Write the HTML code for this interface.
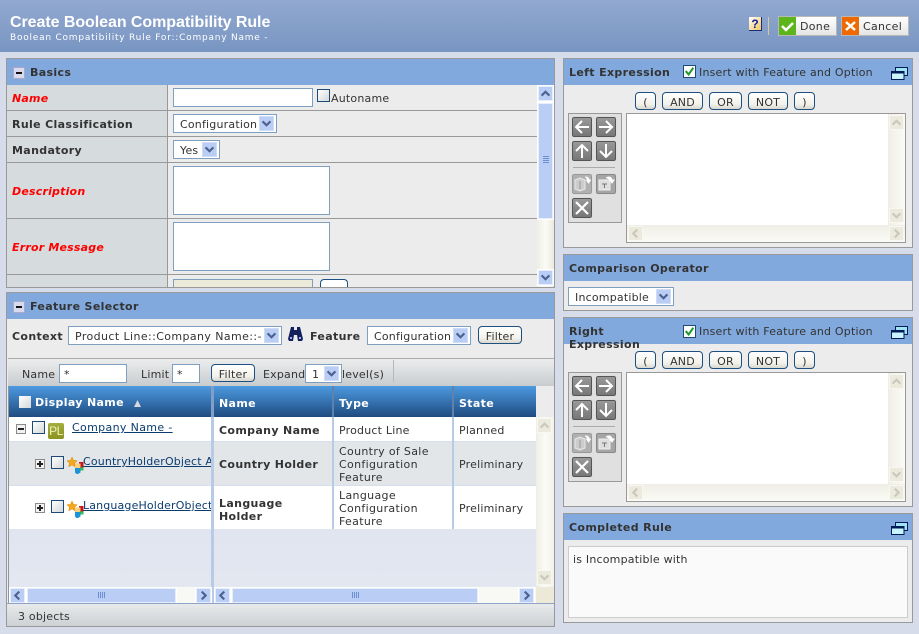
<!DOCTYPE html>
<html><head><meta charset="utf-8"><title>Create Boolean Compatibility Rule</title>
<style>
html,body{margin:0;padding:0}
body{width:919px;height:634px;overflow:hidden;position:relative;background:#d6dcea;font:11px/14px "DejaVu Sans","Liberation Sans",sans-serif;color:#333;letter-spacing:.2px}
div,span,a,svg{position:absolute;box-sizing:border-box}
.t{white-space:nowrap;height:14px;margin-top:1px}
.b{font-weight:bold;letter-spacing:.35px}
.w{color:#fff}
.r{color:#f00;font-style:italic;font-weight:bold;letter-spacing:.2px}
.p{background:#ececec;border:1px solid #999}
.h{background:#81a9dd}
.line{background:#999;height:1px}
.sel{background:#fff;border:1px solid #7f9fc0;height:19px}
.ab{width:15px;height:15px;top:1px;right:2px;background:#b9cdf5;border:1px solid #cfdcf8}
.inp{background:#fff;border:1px solid #7f9fc0;height:19px}
.cb{width:13px;height:13px;border:1px solid #1d4a78;background:linear-gradient(135deg,#fff,#d5d8d8)}
.btn{background:linear-gradient(#fff,#f2f1ea 70%,#d9d8cf);border:1px solid #1d4f80;border-radius:4px;height:18px;text-align:center;line-height:19px;color:#333}
.sq{width:20px;height:20px;background:linear-gradient(#999,#777);border:1px solid #555;border-radius:2px;outline:1px solid #ddd}
.sb{width:15px;height:15px;background:#b9cdf5;border:1px solid #e6eefc;outline:1px solid #fff}
.sd{width:15px;height:15px;background:#ece9dd;border:1px solid #f8f8f2}
.hdr{background:linear-gradient(#4d9ae0,#1f4b80)}
.lk{color:#0b3c6f;text-decoration:underline;letter-spacing:.35px}
.tree{width:10px;height:10px;border:1px solid #8a8a8a;background:#f2f2f2}
.tree i{position:absolute;left:1px;top:3px;width:6px;height:2px;background:#222;display:block}
.tree b{position:absolute;left:3px;top:1px;width:2px;height:6px;background:#222;display:block}
.mn{width:12px;height:12px;background:#d9d9ee;border:1px solid #a9a9c9}
.mn i{position:absolute;left:2px;top:4px;width:6px;height:2px;background:#111;display:block}
</style></head><body>
<svg width="0" height="0" style="left:0;top:0"><defs>
<symbol id="cd" viewBox="0 0 15 15"><path d="M3 5l4.500 4.500L12 5" fill="none" stroke="#4a628f" stroke-width="2.500"/></symbol>
<symbol id="cl" viewBox="0 0 15 15"><path d="M9.500 3L5 7.500 9.500 12" fill="none" stroke="#4a628f" stroke-width="2.500"/></symbol>
<symbol id="cr" viewBox="0 0 15 15"><path d="M5.500 3L10 7.500 5.500 12" fill="none" stroke="#4a628f" stroke-width="2.500"/></symbol>
<symbol id="cu" viewBox="0 0 15 15"><path d="M3 10l4.500-4.500L12 10" fill="none" stroke="#4a628f" stroke-width="2.500"/></symbol>
<symbol id="gd" viewBox="0 0 15 15"><path d="M3 5l4.500 4.500L12 5" fill="none" stroke="#c9c8bd" stroke-width="2.500"/></symbol>
<symbol id="gl" viewBox="0 0 15 15"><path d="M9.500 3L5 7.500 9.500 12" fill="none" stroke="#c9c8bd" stroke-width="2.500"/></symbol>
<symbol id="gr" viewBox="0 0 15 15"><path d="M5.500 3L10 7.500 5.500 12" fill="none" stroke="#c9c8bd" stroke-width="2.500"/></symbol>
<symbol id="gu" viewBox="0 0 15 15"><path d="M3 10l4.500-4.500L12 10" fill="none" stroke="#c9c8bd" stroke-width="2.500"/></symbol>
<symbol id="al" viewBox="0 0 18 18"><path d="M16 9H3M9 3L3 9l6 6" fill="none" stroke="#fff" stroke-width="2"/></symbol>
<symbol id="ar" viewBox="0 0 18 18"><path d="M2 9h13M9 3l6 6-6 6" fill="none" stroke="#fff" stroke-width="2"/></symbol>
<symbol id="au" viewBox="0 0 18 18"><path d="M9 16V3M3 9l6-6 6 6" fill="none" stroke="#fff" stroke-width="2"/></symbol>
<symbol id="ad" viewBox="0 0 18 18"><path d="M9 2v13M3 9l6 6 6-6" fill="none" stroke="#fff" stroke-width="2"/></symbol>
<symbol id="ax" viewBox="0 0 18 18"><path d="M3 3l12 12M15 3L3 15" fill="none" stroke="#fff" stroke-width="2.200"/></symbol>
<symbol id="f1" viewBox="0 0 18 18"><path d="M2 5l5-2 5 2v9l-5 2-5-2z" fill="#ccc" stroke="#e8e8e8"/><path d="M7 6v8" stroke="#999"/><path d="M12 2c3 0 4 1 4 4M13.500 5h4L15.500 8z" fill="#fff" stroke="#fff"/></symbol>
<symbol id="f2" viewBox="0 0 18 18"><rect x="2" y="5" width="11" height="10" fill="#ddd" stroke="#eee"/><path d="M5 9h5M7.500 9v4" stroke="#777"/><path d="M9 3c3-2 6-1 6 3M13 5h4L15 8z" fill="#fff" stroke="#fff"/></symbol>
<symbol id="ws" viewBox="0 0 17 13"><rect x="4.500" y=".5" width="12" height="8" fill="#9fe3f5" stroke="#001b55"/><rect x=".5" y="4.500" width="12.500" height="8" fill="#c8f3ff" stroke="#001b55"/><path d="M1 5.500h12" stroke="#001b55" stroke-width="2"/></symbol>
<symbol id="ck" viewBox="0 0 13 13"><path d="M2 6l3.500 4L11 2" fill="none" stroke="#1f9a2b" stroke-width="2.400"/></symbol>
<symbol id="st" viewBox="0 0 18 18"><path d="M5 0l1.600 3.400 3.600.4-2.700 2.500.8 3.700L5 7.900 1.700 9.800l.8-3.700L-.2 3.800l3.600-.4z" fill="#f5a81c" stroke="#d9860a" stroke-width=".5"/><rect x="12" y="5" width="4.500" height="5.500" fill="#c8161d"/><rect x="8" y="6.500" width="5.500" height="5" fill="#f7d27a"/><rect x="13" y="10.500" width="3.500" height="3" fill="#2fc24a"/><path d="M8 11h5.500v4.500L11 17H9.500L8 15.500z" fill="#1e93d6"/></symbol>
</defs></svg>

<!-- header -->
<div style="left:0;top:0;width:919px;height:52px;background:linear-gradient(#92a9d0,#7895c2)"></div>
<div class="t w" style="left:10px;top:13px;height:18px;font:bold 16px/18px 'Liberation Sans',sans-serif;letter-spacing:-.06px">Create Boolean Compatibility Rule</div>
<div class="t w" style="left:10px;top:30px;font:9px/14px 'DejaVu Sans',sans-serif;letter-spacing:.77px">Boolean Compatibility Rule For::Company Name -</div>
<div style="left:749px;top:17px;width:13px;height:14px;background:linear-gradient(135deg,#fff,#f4c75a);border-right:1px solid #14307a;border-bottom:1px solid #14307a;font:bold 12px/14px 'Liberation Sans',sans-serif;color:#14209a;text-align:center;letter-spacing:0">?</div>
<div style="left:768px;top:17px;width:1px;height:18px;background:#d5c9a0"></div>
<div style="left:778px;top:16px;width:59px;height:20px;background:linear-gradient(#fff,#e5e5e5);border:1px solid #b8b8b8"></div>
<div style="left:779px;top:17px;width:17px;height:18px;background:#5cb51a"><svg width="17" height="18" viewBox="0 0 17 18" style="left:0;top:0"><path d="M3 9l4 4 7-7" fill="none" stroke="#fff" stroke-width="2.500"/></svg></div>
<div class="t" style="left:800px;top:19px;letter-spacing:.3px">Done</div>
<div style="left:841px;top:16px;width:68px;height:20px;background:linear-gradient(#fff,#e5e5e5);border:1px solid #b8b8b8"></div>
<div style="left:842px;top:17px;width:17px;height:18px;background:#ee6a00"><svg width="17" height="18" viewBox="0 0 17 18" style="left:0;top:0"><path d="M4 5l9 8M13 5l-9 8" fill="none" stroke="#fff" stroke-width="2.500"/></svg></div>
<div class="t" style="left:863px;top:19px;letter-spacing:.3px">Cancel</div>

<!-- Basics -->
<div class="p" style="left:6px;top:58px;width:549px;height:230px"></div>
<div class="h" style="left:7px;top:59px;width:547px;height:26px"></div>
<div class="mn" style="left:13px;top:67px"><i></i></div>
<div class="t b" style="left:30px;top:65px">Basics</div>
<div style="left:7px;top:85px;width:160px;height:202px;background:#d6dbdd"></div>
<div style="left:167px;top:85px;width:1px;height:202px;background:#999"></div>
<div class="line" style="left:7px;top:110px;width:530px"></div>
<div class="line" style="left:7px;top:136px;width:530px"></div>
<div class="line" style="left:7px;top:162px;width:530px"></div>
<div class="line" style="left:7px;top:218px;width:530px"></div>
<div class="line" style="left:7px;top:274px;width:530px"></div>
<div class="t r" style="left:12px;top:91px">Name</div>
<div class="t b" style="left:12px;top:117px">Rule Classification</div>
<div class="t b" style="left:12px;top:143px">Mandatory</div>
<div class="t r" style="left:12px;top:184px">Description</div>
<div class="t r" style="left:12px;top:240px">Error Message</div>
<div class="inp" style="left:173px;top:88px;width:140px"></div>
<div class="cb" style="left:317px;top:89px"></div>
<div class="t" style="left:331px;top:91px">Autoname</div>
<div class="sel" style="left:173px;top:114px;width:104px"><div class="t" style="left:6px;top:2px">Configuration</div><div class="ab"><svg width="13" height="13" style="left:0;top:0"><use href="#cd"/></svg></div></div>
<div class="sel" style="left:173px;top:140px;width:47px"><div class="t" style="left:6px;top:2px">Yes</div><div class="ab"><svg width="13" height="13" style="left:0;top:0"><use href="#cd"/></svg></div></div>
<div class="inp" style="left:173px;top:166px;width:157px;height:49px"></div>
<div class="inp" style="left:173px;top:222px;width:157px;height:49px"></div>
<div style="left:173px;top:279px;width:140px;height:8px;background:#ecead8;border:1px solid #7f9fc0;border-bottom:0"></div>
<div style="left:320px;top:279px;width:28px;height:8px;background:#fff;border:1px solid #1d4f80;border-bottom:0;border-radius:4px 4px 0 0"></div>
<div style="left:537px;top:85px;width:17px;height:202px;background:linear-gradient(90deg,#efeee5,#fbfbf7,#ece9dd)"></div>
<div class="sb" style="left:538px;top:86px"><svg width="13" height="13" style="left:0;top:0"><use href="#cu"/></svg></div>
<div class="sb" style="left:538px;top:103px;height:116px"><div style="left:4px;top:52px;width:6px;height:8px;background:repeating-linear-gradient(#6f8ed0 0 1px,transparent 1px 2px)"></div></div>
<div class="sb" style="left:538px;top:270px"><svg width="13" height="13" style="left:0;top:0"><use href="#cd"/></svg></div>

<!-- Feature Selector -->
<div class="p" style="left:6px;top:292px;width:549px;height:335px"></div>
<div class="h" style="left:7px;top:293px;width:547px;height:26px"></div>
<div class="mn" style="left:13px;top:301px"><i></i></div>
<div class="t b" style="left:30px;top:299px">Feature Selector</div>
<div class="t b" style="left:12px;top:329px">Context</div>
<div class="sel" style="left:68px;top:326px;width:214px"><div class="t" style="left:6px;top:2px;letter-spacing:.4px">Product Line::Company Name::-</div><div class="ab"><svg width="13" height="13" style="left:0;top:0"><use href="#cd"/></svg></div></div>
<svg width="15" height="14" viewBox="0 0 15 14" style="left:288px;top:327px"><path d="M3 0h3v3h3V0h3l1 4 2 8-1 2h-4L9 8H6l-1 6H1l-1-2 2-8z" fill="#14205e"/><path d="M2 10h2v2H2zM11 10h2v2h-2z" fill="#9fb0e8"/></svg>
<div class="t b" style="left:310px;top:329px">Feature</div>
<div class="sel" style="left:367px;top:326px;width:104px"><div class="t" style="left:6px;top:2px">Configuration</div><div class="ab"><svg width="13" height="13" style="left:0;top:0"><use href="#cd"/></svg></div></div>
<div class="btn" style="left:478px;top:326px;width:44px">Filter</div>

<div style="left:8px;top:358px;width:546px;height:28px;background:linear-gradient(#eceded,#c8cccf);border-top:1px solid #aaa"></div>
<div class="t" style="left:22px;top:367px">Name</div>
<div class="inp" style="left:59px;top:364px;width:68px"><div class="t" style="left:4px;top:2px">*</div></div>
<div class="t" style="left:141px;top:367px">Limit</div>
<div class="inp" style="left:172px;top:364px;width:28px"><div class="t" style="left:4px;top:2px">*</div></div>
<div class="btn" style="left:211px;top:364px;width:44px">Filter</div>
<div class="t" style="left:263px;top:367px">Expand</div>
<div class="sel" style="left:305px;top:364px;width:37px"><div class="t" style="left:6px;top:2px">1</div><div class="ab"><svg width="13" height="13" style="left:0;top:0"><use href="#cd"/></svg></div></div>
<div class="t" style="left:342px;top:367px">level(s)</div>
<div style="left:393px;top:360px;width:1px;height:22px;background:#b4b8bb"></div>

<div style="left:9px;top:386px;width:527px;height:217px;background:linear-gradient(#d8deec,#e4e8f1)"></div>
<div style="left:8px;top:386px;width:1px;height:217px;background:#8a95a8"></div>
<div class="hdr" style="left:9px;top:386px;width:527px;height:31px"></div>
<div class="cb" style="left:19px;top:396px;border:0;width:12px;height:12px"></div>
<div class="t b w" style="left:35px;top:395px">Display Name</div>
<svg width="7" height="7" style="left:134px;top:400px"><path d="M3.500 0L7 7H0z" fill="#d5d8dc"/></svg>
<div class="t b w" style="left:219px;top:396px">Name</div>
<div class="t b w" style="left:339px;top:396px">Type</div>
<div class="t b w" style="left:459px;top:396px">State</div>

<div style="left:9px;top:417px;width:527px;height:24px;background:#fff"></div>
<div style="left:9px;top:441px;width:527px;height:45px;background:#e3e6e8;border-top:1px solid #d5e0ec;border-bottom:1px solid #d5e0ec"></div>
<div style="left:9px;top:486px;width:527px;height:43px;background:#fff"></div>

<div style="left:211px;top:386px;width:3px;height:217px;background:#b8cbe6"></div>
<div style="left:211px;top:386px;width:3px;height:31px;background:#7f9fc8"></div>
<div style="left:332px;top:417px;width:2px;height:112px;background:#b8cbe6"></div>
<div style="left:332px;top:386px;width:2px;height:31px;background:#5f82ac"></div>
<div style="left:452px;top:417px;width:2px;height:112px;background:#b8cbe6"></div>
<div style="left:452px;top:386px;width:2px;height:31px;background:#5f82ac"></div>

<div class="tree" style="left:16px;top:424px"><i></i></div>
<div class="cb" style="left:32px;top:421px"></div>
<div style="left:48px;top:423px;width:16px;height:16px;border-radius:2px;background:linear-gradient(#a4ad3c,#8c9420);color:#eef2c0;font:12px/16px 'Liberation Sans',sans-serif;text-align:center;letter-spacing:-.5px">PL</div>
<a class="t lk" style="left:72px;top:420px">Company Name -</a>
<div class="t b" style="left:219px;top:423px">Company Name</div>
<div class="t" style="left:339px;top:423px">Product Line</div>
<div class="t" style="left:459px;top:423px">Planned</div>

<div class="tree" style="left:35px;top:459px"><i></i><b></b></div>
<div class="cb" style="left:51px;top:456px"></div>
<svg width="18" height="18" style="left:67px;top:457px"><use href="#st"/></svg>
<div style="left:83px;top:454px;width:128px;height:17px;overflow:hidden"><a class="t lk" style="left:0;top:0;letter-spacing:.15px">CountryHolderObject A</a></div>
<div class="t b" style="left:219px;top:457px">Country Holder</div>
<div class="t" style="left:339px;top:444px;height:39px;line-height:13px;white-space:normal;width:112px;letter-spacing:.33px">Country of Sale<br>Configuration<br>Feature</div>
<div class="t" style="left:459px;top:457px">Preliminary</div>

<div class="tree" style="left:35px;top:503px"><i></i><b></b></div>
<div class="cb" style="left:51px;top:500px"></div>
<svg width="18" height="18" style="left:67px;top:501px"><use href="#st"/></svg>
<div style="left:83px;top:498px;width:128px;height:17px;overflow:hidden"><a class="t lk" style="left:0;top:0;letter-spacing:.15px">LanguageHolderObject</a></div>
<div class="t b" style="left:219px;top:496px;height:26px;line-height:13px">Language<br>Holder</div>
<div class="t" style="left:339px;top:488px;height:39px;line-height:13px;letter-spacing:.33px">Language<br>Configuration<br>Feature</div>
<div class="t" style="left:459px;top:501px">Preliminary</div>

<!-- table scrollbars -->
<div style="left:536px;top:417px;width:18px;height:170px;background:linear-gradient(90deg,#efeee5,#fbfbf7,#f3f2ea)"></div>
<div class="sd" style="left:537px;top:418px"><svg width="13" height="13" style="left:0;top:0"><use href="#gu"/></svg></div>
<div class="sd" style="left:537px;top:570px"><svg width="13" height="13" style="left:0;top:0"><use href="#gd"/></svg></div>
<div style="left:536px;top:587px;width:18px;height:16px;background:#ece9d8"></div>
<div style="left:9px;top:587px;width:527px;height:16px;background:#f8f8f4"></div>
<div style="left:211px;top:587px;width:3px;height:16px;background:#b8cbe6"></div>
<div class="sb" style="left:10px;top:588px"><svg width="13" height="13" style="left:0;top:0"><use href="#cl"/></svg></div>
<div class="sb" style="left:27px;top:588px;width:149px"><div style="left:70px;top:3px;width:8px;height:6px;background:repeating-linear-gradient(90deg,#6f8ed0 0 1px,transparent 1px 2px)"></div></div>
<div class="sb" style="left:196px;top:588px"><svg width="13" height="13" style="left:0;top:0"><use href="#cr"/></svg></div>
<div class="sb" style="left:215px;top:588px"><svg width="13" height="13" style="left:0;top:0"><use href="#cl"/></svg></div>
<div class="sb" style="left:232px;top:588px;width:246px"><div style="left:119px;top:3px;width:8px;height:6px;background:repeating-linear-gradient(90deg,#6f8ed0 0 1px,transparent 1px 2px)"></div></div>
<div class="sb" style="left:519px;top:588px"><svg width="13" height="13" style="left:0;top:0"><use href="#cr"/></svg></div>
<div style="left:7px;top:603px;width:547px;height:23px;background:linear-gradient(#e8eaeb,#cdd1d4);border-top:1px solid #8ea4c4"></div>
<div class="t" style="left:18px;top:609px">3 objects</div>

<!-- Left Expression -->
<div class="p" style="left:563px;top:58px;width:350px;height:190px"></div>
<div class="h" style="left:564px;top:59px;width:348px;height:26px"></div>
<div class="t b" style="left:569px;top:65px">Left Expression</div>
<div class="cb" style="left:683px;top:65px;background:#fff"><svg width="11" height="11" viewBox="0 0 13 13" style="left:0;top:0"><use href="#ck"/></svg></div>
<div class="t" style="left:699px;top:65px">Insert with Feature and Option</div>
<svg width="17" height="13" style="left:891px;top:67px"><use href="#ws"/></svg>
<div class="btn" style="left:635px;top:92px;width:21px">(</div>
<div class="btn" style="left:662px;top:92px;width:41px">AND</div>
<div class="btn" style="left:709px;top:92px;width:33px">OR</div>
<div class="btn" style="left:748px;top:92px;width:40px">NOT</div>
<div class="btn" style="left:794px;top:92px;width:21px">)</div>
<div style="left:568px;top:113px;width:54px;height:110px;background:#e0e0e0;border:1px solid #999"></div>
<div class="sq" style="left:572px;top:117px"><svg width="18" height="18" style="left:0;top:0"><use href="#al"/></svg></div>
<div class="sq" style="left:596px;top:117px"><svg width="18" height="18" style="left:0;top:0"><use href="#ar"/></svg></div>
<div class="sq" style="left:572px;top:141px"><svg width="18" height="18" style="left:0;top:0"><use href="#au"/></svg></div>
<div class="sq" style="left:596px;top:141px"><svg width="18" height="18" style="left:0;top:0"><use href="#ad"/></svg></div>
<div style="left:573px;top:167px;width:42px;height:1px;background:#aaa"></div>
<div class="sq" style="left:572px;top:174px;background:#b0b0b0;border-color:#999"><svg width="18" height="18" style="left:0;top:0"><use href="#f1"/></svg></div>
<div class="sq" style="left:596px;top:174px;background:#a5a5a5;border-color:#888"><svg width="18" height="18" style="left:0;top:0"><use href="#f2"/></svg></div>
<div class="sq" style="left:572px;top:198px"><svg width="18" height="18" style="left:0;top:0"><use href="#ax"/></svg></div>
<div style="left:626px;top:113px;width:280px;height:130px;background:#fff;border:1px solid #999"></div>
<div style="left:888px;top:114px;width:17px;height:111px;background:linear-gradient(90deg,#efeee5,#fbfbf7)"></div>
<div style="left:627px;top:225px;width:278px;height:17px;background:linear-gradient(#efeee5,#fbfbf7)"></div>
<div class="sd" style="left:889px;top:115px"><svg width="13" height="13" style="left:0;top:0"><use href="#gu"/></svg></div>
<div class="sd" style="left:889px;top:208px"><svg width="13" height="13" style="left:0;top:0"><use href="#gd"/></svg></div>
<div class="sd" style="left:628px;top:226px"><svg width="13" height="13" style="left:0;top:0"><use href="#gl"/></svg></div>
<div class="sd" style="left:889px;top:226px"><svg width="13" height="13" style="left:0;top:0"><use href="#gr"/></svg></div>

<!-- Comparison Operator -->
<div class="p" style="left:563px;top:254px;width:350px;height:57px"></div>
<div class="h" style="left:564px;top:255px;width:348px;height:26px"></div>
<div class="t b" style="left:569px;top:261px">Comparison Operator</div>
<div class="sel" style="left:568px;top:287px;width:106px"><div class="t" style="left:6px;top:2px">Incompatible</div><div class="ab"><svg width="13" height="13" style="left:0;top:0"><use href="#cd"/></svg></div></div>

<!-- Right Expression -->
<div class="p" style="left:563px;top:317px;width:350px;height:190px"></div>
<div class="h" style="left:564px;top:318px;width:348px;height:26px"></div>
<div class="t b" style="left:569px;top:324px">Right</div>
<div class="t b" style="left:569px;top:337px">Expression</div>
<div class="cb" style="left:683px;top:325px;background:#fff"><svg width="11" height="11" viewBox="0 0 13 13" style="left:0;top:0"><use href="#ck"/></svg></div>
<div class="t" style="left:699px;top:324px">Insert with Feature and Option</div>
<svg width="17" height="13" style="left:891px;top:326px"><use href="#ws"/></svg>
<div class="btn" style="left:635px;top:351px;width:21px">(</div>
<div class="btn" style="left:662px;top:351px;width:41px">AND</div>
<div class="btn" style="left:709px;top:351px;width:33px">OR</div>
<div class="btn" style="left:748px;top:351px;width:40px">NOT</div>
<div class="btn" style="left:794px;top:351px;width:21px">)</div>
<div style="left:568px;top:372px;width:54px;height:110px;background:#e0e0e0;border:1px solid #999"></div>
<div class="sq" style="left:572px;top:376px"><svg width="18" height="18" style="left:0;top:0"><use href="#al"/></svg></div>
<div class="sq" style="left:596px;top:376px"><svg width="18" height="18" style="left:0;top:0"><use href="#ar"/></svg></div>
<div class="sq" style="left:572px;top:400px"><svg width="18" height="18" style="left:0;top:0"><use href="#au"/></svg></div>
<div class="sq" style="left:596px;top:400px"><svg width="18" height="18" style="left:0;top:0"><use href="#ad"/></svg></div>
<div style="left:573px;top:426px;width:42px;height:1px;background:#aaa"></div>
<div class="sq" style="left:572px;top:433px;background:#b0b0b0;border-color:#999"><svg width="18" height="18" style="left:0;top:0"><use href="#f1"/></svg></div>
<div class="sq" style="left:596px;top:433px;background:#a5a5a5;border-color:#888"><svg width="18" height="18" style="left:0;top:0"><use href="#f2"/></svg></div>
<div class="sq" style="left:572px;top:457px"><svg width="18" height="18" style="left:0;top:0"><use href="#ax"/></svg></div>
<div style="left:626px;top:372px;width:280px;height:130px;background:#fff;border:1px solid #999"></div>
<div style="left:888px;top:373px;width:17px;height:111px;background:linear-gradient(90deg,#efeee5,#fbfbf7)"></div>
<div style="left:627px;top:484px;width:278px;height:17px;background:linear-gradient(#efeee5,#fbfbf7)"></div>
<div class="sd" style="left:889px;top:374px"><svg width="13" height="13" style="left:0;top:0"><use href="#gu"/></svg></div>
<div class="sd" style="left:889px;top:467px"><svg width="13" height="13" style="left:0;top:0"><use href="#gd"/></svg></div>
<div class="sd" style="left:628px;top:485px"><svg width="13" height="13" style="left:0;top:0"><use href="#gl"/></svg></div>
<div class="sd" style="left:889px;top:485px"><svg width="13" height="13" style="left:0;top:0"><use href="#gr"/></svg></div>

<!-- Completed Rule -->
<div class="p" style="left:563px;top:513px;width:350px;height:110px"></div>
<div class="h" style="left:564px;top:514px;width:348px;height:26px"></div>
<div class="t b" style="left:569px;top:520px">Completed Rule</div>
<svg width="17" height="13" style="left:891px;top:522px"><use href="#ws"/></svg>
<div style="left:568px;top:546px;width:340px;height:72px;background:#fafafa;border:1px solid #ccc"></div>
<div class="t" style="left:573px;top:552px">is Incompatible with</div>
</body></html>
